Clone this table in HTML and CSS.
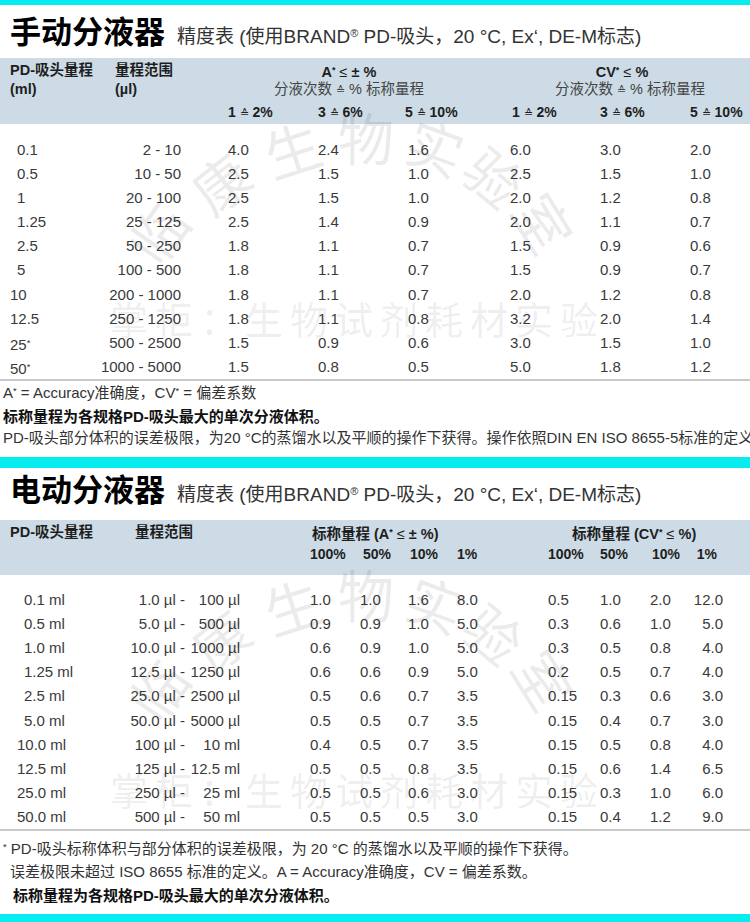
FILE: index.html
```html
<!DOCTYPE html>
<html lang="zh-CN">
<head>
<meta charset="utf-8">
<title>分液器精度表</title>
<link rel="stylesheet" href="styles.css">
</head>
<body>
<section class="sec sec1">
  <div class="bar bar-top"></div>
  <div class="title-row">
    <h1 class="title">手动分液器</h1>
    <span class="subtitle">精度表 (使用BRAND<span class="reg">®</span> PD-吸头，20 °C, Ex‘, DE-M标志)</span>
  </div>
  <div class="tbl t1">
    <div class="head">
      <div class="row hr1">
        <div class="c1h">PD-吸头量程</div>
        <div class="c2h">量程范围</div>
        <div class="span3 c ga">A<span class="ast">*</span> <span class="thin">≤</span> ± %</div>
        <div class="span3 c gcv">CV<span class="ast">*</span> <span class="thin">≤</span> %</div>
      </div>
      <div class="row hr2">
        <div class="c1h">(ml)</div>
        <div class="c2h">(µl)</div>
        <div class="span3 c ga sub">分液次数 <span class="eq">≙</span> % 标称量程</div>
        <div class="span3 c sub">分液次数 <span class="eq">≙</span> % 标称量程</div>
      </div>
      <div class="row hr3">
        <div></div><div></div>
        <div>1 <span class="eq">≙</span> 2%</div>
        <div>3 <span class="eq">≙</span> 6%</div>
        <div class="nl3">5 <span class="eq">≙</span> 10%</div>
        <div class="pl2">1 <span class="eq">≙</span> 2%</div>
        <div>3 <span class="eq">≙</span> 6%</div>
        <div>5 <span class="eq">≙</span> 10%</div>
      </div>
    </div>
    <div class="body">
      <div class="row"><div class="c1">0.1</div><div class="c2">2 - 10</div><div>4.0</div><div>2.4</div><div>1.6</div><div>6.0</div><div>3.0</div><div>2.0</div></div>
      <div class="row"><div class="c1">0.5</div><div class="c2">10 - 50</div><div>2.5</div><div>1.5</div><div>1.0</div><div>2.5</div><div>1.5</div><div>1.0</div></div>
      <div class="row"><div class="c1">1</div><div class="c2">20 - 100</div><div>2.5</div><div>1.5</div><div>1.0</div><div>2.0</div><div>1.2</div><div>0.8</div></div>
      <div class="row"><div class="c1">1.25</div><div class="c2">25 - 125</div><div>2.5</div><div>1.4</div><div>0.9</div><div>2.0</div><div>1.1</div><div>0.7</div></div>
      <div class="row"><div class="c1">2.5</div><div class="c2">50 - 250</div><div>1.8</div><div>1.1</div><div>0.7</div><div>1.5</div><div>0.9</div><div>0.6</div></div>
      <div class="row"><div class="c1">5</div><div class="c2">100 - 500</div><div>1.8</div><div>1.1</div><div>0.7</div><div>1.5</div><div>0.9</div><div>0.7</div></div>
      <div class="row"><div class="c1 w">10</div><div class="c2">200 - 1000</div><div>1.8</div><div>1.1</div><div>0.7</div><div>2.0</div><div>1.2</div><div>0.8</div></div>
      <div class="row"><div class="c1 w">12.5</div><div class="c2">250 - 1250</div><div>1.8</div><div>1.1</div><div>0.8</div><div>3.2</div><div>2.0</div><div>1.4</div></div>
      <div class="row"><div class="c1 w">25<span class="ast">*</span></div><div class="c2">500 - 2500</div><div>1.5</div><div>0.9</div><div>0.6</div><div>3.0</div><div>1.5</div><div>1.0</div></div>
      <div class="row"><div class="c1 w">50<span class="ast">*</span></div><div class="c2">1000 - 5000</div><div>1.5</div><div>0.8</div><div>0.5</div><div>5.0</div><div>1.8</div><div>1.2</div></div>
    </div>
  </div>
  <div class="notes">
    <p class="n1">A<span class="ast">*</span> = Accuracy准确度，CV<span class="ast">*</span> = 偏差系数</p>
    <p class="n2 b">标称量程为各规格PD-吸头最大的单次分液体积。</p>
    <p class="n3">PD-吸头部分体积的误差极限，为20 °C的蒸馏水以及平顺的操作下获得。操作依照DIN EN ISO 8655-5标准的定义。</p>
  </div>
  <div class="wm" aria-hidden="true">
    <span class="wc k1">临</span><span class="wc k2">康</span><span class="wc k3">生</span><span class="wc k4">物</span><span class="wc k5">实</span><span class="wc k6">验</span><span class="wc k7">室</span>
    <span class="wh">掌柜：生物试剂耗材实验</span>
  </div>
</section>

<section class="sec sec2">
  <div class="bar bar-mid"></div>
  <div class="title-row">
    <h1 class="title">电动分液器</h1>
    <span class="subtitle">精度表 (使用BRAND<span class="reg">®</span> PD-吸头，20 °C, Ex‘, DE-M标志)</span>
  </div>
  <div class="tbl t2">
    <div class="head">
      <div class="row hr1">
        <div class="c1h">PD-吸头量程</div>
        <div class="span2 rh">量程范围</div>
        <div class="span4 pl2">标称量程 (A<span class="ast">*</span> <span class="thin">≤</span> ± %)</div>
        <div class="span4 pl24">标称量程 (CV<span class="ast">*</span> <span class="thin">≤</span> %)</div>
      </div>
      <div class="row hr2">
        <div></div><div class="span2"></div>
        <div>100%</div><div class="pl3">50%</div><div class="pl2">10%</div><div>1%</div>
        <div>100%</div><div>50%</div><div class="pl2">10%</div><div class="r pr33">1%</div>
      </div>
    </div>
    <div class="body">
      <div class="row"><div class="c1">0.1 ml</div><div class="r pa">1.0 µl -</div><div class="r pb">100 µl</div><div>1.0</div><div>1.0</div><div>1.6</div><div>8.0</div><div>0.5</div><div>1.0</div><div>2.0</div><div class="r pe">12.0</div></div>
      <div class="row"><div class="c1">0.5 ml</div><div class="r pa">5.0 µl -</div><div class="r pb">500 µl</div><div>0.9</div><div>0.9</div><div>1.0</div><div>5.0</div><div>0.3</div><div>0.6</div><div>1.0</div><div class="r pe">5.0</div></div>
      <div class="row"><div class="c1">1.0 ml</div><div class="r pa">10.0 µl -</div><div class="r pb">1000 µl</div><div>0.6</div><div>0.9</div><div>1.0</div><div>5.0</div><div>0.3</div><div>0.5</div><div>0.8</div><div class="r pe">4.0</div></div>
      <div class="row"><div class="c1">1.25 ml</div><div class="r pa">12.5 µl -</div><div class="r pb">1250 µl</div><div>0.6</div><div>0.6</div><div>0.9</div><div>5.0</div><div>0.2</div><div>0.5</div><div>0.7</div><div class="r pe">4.0</div></div>
      <div class="row"><div class="c1">2.5 ml</div><div class="r pa">25.0 µl -</div><div class="r pb">2500 µl</div><div>0.5</div><div>0.6</div><div>0.7</div><div>3.5</div><div>0.15</div><div>0.3</div><div>0.6</div><div class="r pe">3.0</div></div>
      <div class="row"><div class="c1">5.0 ml</div><div class="r pa">50.0 µl -</div><div class="r pb">5000 µl</div><div>0.5</div><div>0.5</div><div>0.7</div><div>3.5</div><div>0.15</div><div>0.4</div><div>0.7</div><div class="r pe">3.0</div></div>
      <div class="row"><div class="c1 w">10.0 ml</div><div class="r pa">100 µl -</div><div class="r pb">10 ml</div><div>0.4</div><div>0.5</div><div>0.7</div><div>3.5</div><div>0.15</div><div>0.5</div><div>0.8</div><div class="r pe">4.0</div></div>
      <div class="row"><div class="c1 w">12.5 ml</div><div class="r pa">125 µl -</div><div class="r pb">12.5 ml</div><div>0.5</div><div>0.5</div><div>0.8</div><div>3.5</div><div>0.15</div><div>0.6</div><div>1.4</div><div class="r pe">6.5</div></div>
      <div class="row"><div class="c1 w">25.0 ml</div><div class="r pa">250 µl -</div><div class="r pb">25 ml</div><div>0.5</div><div>0.5</div><div>0.6</div><div>3.0</div><div>0.15</div><div>0.3</div><div>1.0</div><div class="r pe">6.0</div></div>
      <div class="row"><div class="c1 w">50.0 ml</div><div class="r pa">500 µl -</div><div class="r pb">50 ml</div><div>0.5</div><div>0.5</div><div>0.5</div><div>3.0</div><div>0.15</div><div>0.4</div><div>1.2</div><div class="r pe">9.0</div></div>
    </div>
  </div>
  <div class="notes">
    <p class="n1"><span class="ast">*</span> PD-吸头标称体积与部分体积的误差极限，为 20 °C 的蒸馏水以及平顺的操作下获得。</p>
    <p class="n2">误差极限未超过 ISO 8655 标准的定义。A = Accuracy准确度，CV = 偏差系数。</p>
    <p class="n3 b">标称量程为各规格PD-吸头最大的单次分液体积。</p>
  </div>
  <div class="bar bar-bottom"></div>
  <div class="wm" aria-hidden="true">
    <span class="wc k1">临</span><span class="wc k2">康</span><span class="wc k3">生</span><span class="wc k4">物</span><span class="wc k5">实</span><span class="wc k6">验</span><span class="wc k7">室</span>
    <span class="wh">掌柜：生物试剂耗材实验</span>
  </div>
</section>
</body>
</html>
```

FILE: styles.css
```css
* { box-sizing: border-box; margin: 0; padding: 0; }

body {
  width: 750px;
  font-family: "Liberation Sans", "Noto Sans CJK SC", sans-serif;
  color: #333;
  background: #fff;
  overflow: hidden;
}

.sec { position: relative; }

.bar { background: #06edf0; }
.bar-top { height: 5px; }
.bar-mid { height: 11px; }
.bar-bottom { height: 12px; }

/* title */
.title-row {
  display: flex;
  align-items: baseline;
  padding-left: 10px;
  white-space: nowrap;
}
.sec1 .title-row { height: 53px; padding-top: 9px; }
.sec2 .title-row { height: 52px; padding-top: 4px; }

.title {
  font-family: "Noto Sans CJK SC", sans-serif;
  font-weight: 700;
  font-size: 31px;
  line-height: 31px;
  color: #000;
}
.subtitle {
  margin-left: 12px;
  font-size: 19px;
  line-height: 20px;
  color: #333;
}
.reg { font-size: 11px; vertical-align: 6px; }

/* tables */
.row { display: grid; }
.t1 .row { grid-template-columns: 95px 133px 90px 90px 102px 90px 90px 60px; }
.t2 .row { grid-template-columns: 100px 90px 120px 50px 48px 49px 91px 52px 50px 42px 58px; }

.head {
  background: #ccdbe5;
  color: #1e1e1e;
  font-weight: 700;
  font-size: 14.5px;
}
.head .row { line-height: 17px; white-space: nowrap; }
.t1 .head { height: 66px; padding-top: 4px; }
.t1 .hr3 { margin-top: 5px; font-size: 14px; }
.t2 .head { height: 55px; padding-top: 4px; }
.t2 .hr2 { margin-top: 3px; font-size: 14px; }

.span2 { grid-column: span 2; }
.span3 { grid-column: span 3; }
.span4 { grid-column: span 4; }
.c { text-align: center; }
.r { text-align: right; }

.c1h { padding-left: 10px; }
.c2h { padding-left: 20px; }
.rh { padding-left: 35px; }
.ga { padding-right: 40px; }
.gcv { padding-right: 16px; }
.sub { font-weight: 400; font-size: 14.5px; color: #444; }
.thin { font-weight: 400; }
.eq { font-weight: 400; font-size: 11px; }
.nl3 { margin-left: -3px; }
.pl2 { padding-left: 2px; }
.pl3 { padding-left: 3px; }
.pl24 { padding-left: 24px; }
.pr33 { padding-right: 33px; }

.ast { font-size: 0.62em; vertical-align: 0.45em; }

.body {
  border-bottom: 2px solid #c8c8c8;
  font-size: 15px;
  color: #3a3a3a;
}
.t1 .body { padding-top: 14px; }
.t2 .body { padding-top: 13px; }
.body .row { height: 24.1px; line-height: 24.1px; white-space: nowrap; }

.t1 .c1 { padding-left: 17px; }
.t1 .c1.w { padding-left: 10px; }
.t1 .c2 { text-align: right; padding-right: 47px; }
.t2 .c1 { padding-left: 24px; }
.t2 .c1.w { padding-left: 17px; }
.pa { padding-right: 5px; }
.pb { padding-right: 70px; }
.pe { padding-right: 27px; }

/* notes */
.notes {
  font-size: 15px;
  line-height: 20px;
  white-space: nowrap;
  overflow: hidden;
  color: #333;
}
.b { font-weight: 700; color: #111; }
.sec1 .notes { padding-left: 3px; padding-bottom: 9px; }
.sec1 .n2 { margin-top: 4px; }
.sec1 .n3 { margin-top: 1px; }
.sec2 .notes { padding-top: 6px; padding-bottom: 8px; }
.sec2 .n1 { padding-left: 3px; }
.sec2 .n2 { padding-left: 10px; margin-top: 3px; }
.sec2 .n3 { padding-left: 13px; margin-top: 4px; }

/* watermark overlay */
.wm {
  position: absolute;
  inset: 0;
  pointer-events: none;
  overflow: hidden;
  color: rgba(0, 0, 0, 0.08);
  font-family: "Noto Sans CJK SC", sans-serif;
}
.wc {
  position: absolute;
  width: 58px;
  height: 58px;
  line-height: 58px;
  font-size: 56px;
  text-align: center;
}
.k1 { left: 128px; top: 203px; transform: rotate(-55deg); }
.k2 { left: 191px; top: 153px; transform: rotate(-38deg); }
.k3 { left: 263px; top: 119px; transform: rotate(-18deg); }
.k4 { left: 337px; top: 107px; transform: rotate(0deg); }
.k5 { left: 407px; top: 117px; transform: rotate(20deg); }
.k6 { left: 466px; top: 147px; transform: rotate(40deg); }
.k7 { left: 516px; top: 193px; transform: rotate(58deg); }
.wh {
  position: absolute;
  left: 110px;
  font-size: 38px;
  line-height: 38px;
  letter-spacing: 7px;
  white-space: nowrap;
}
.sec1 .wh { top: 299px; }
.sec2 .wh { top: 313px; }
```
